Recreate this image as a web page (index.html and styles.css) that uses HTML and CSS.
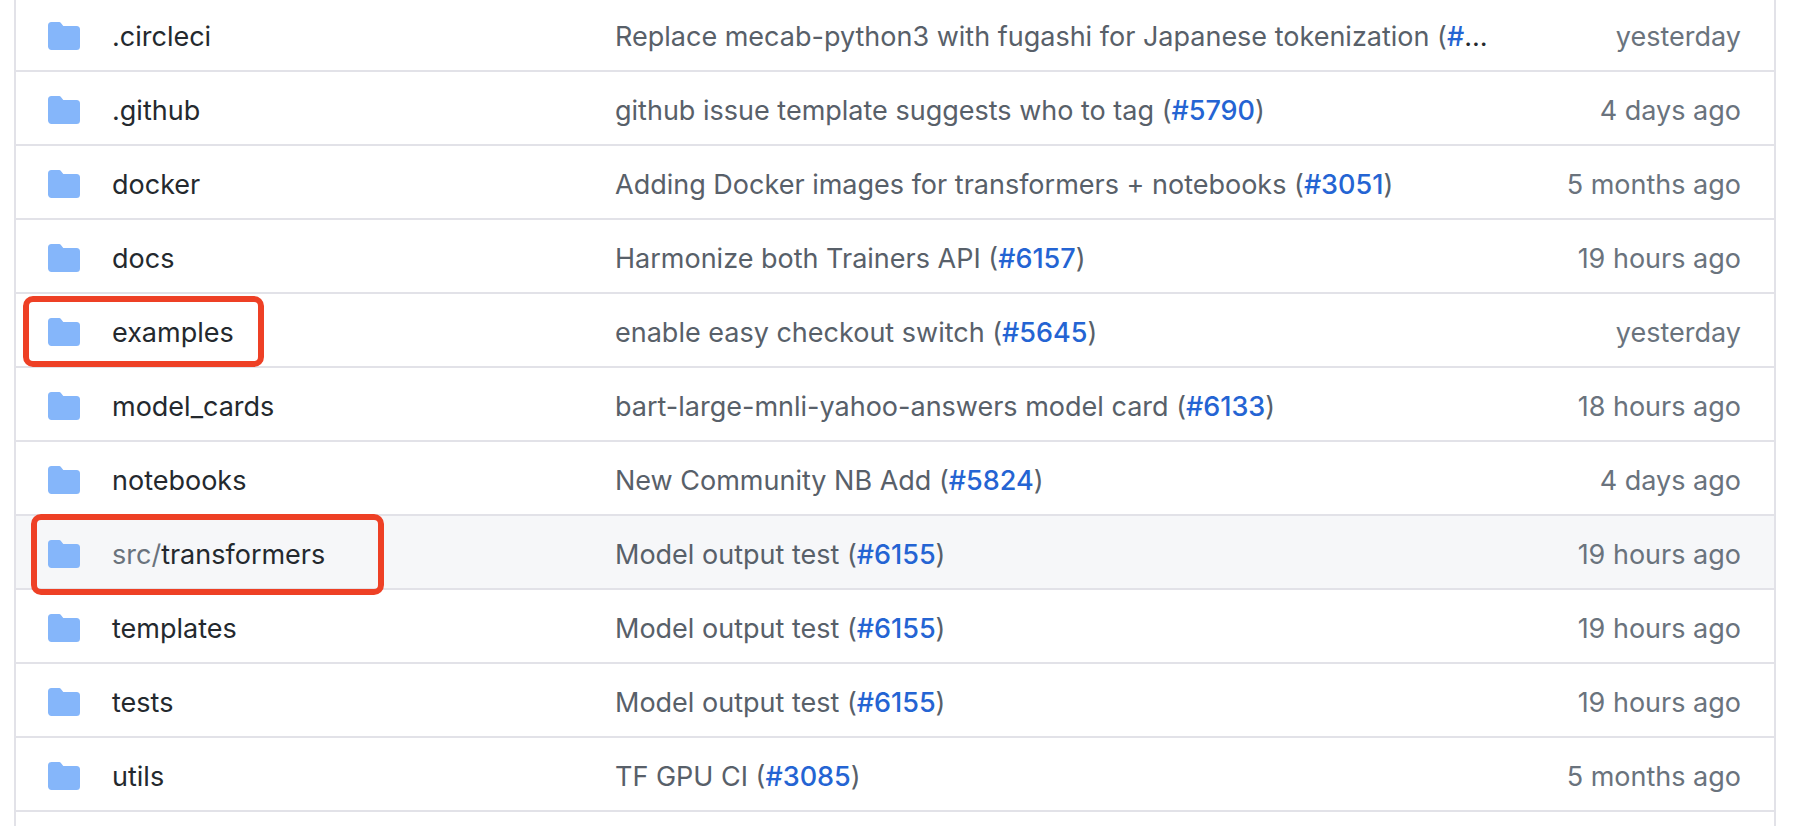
FILE: index.html
```
<!DOCTYPE html>
<html lang="en">
<head>
<meta charset="utf-8">
<title>Files</title>
<link rel="stylesheet" href="styles.css">
</head>
<body>
<svg class="sprite" aria-hidden="true">
  <symbol id="folder" viewBox="0 0 16 16"><path d="M1.75 1A1.75 1.75 0 000 2.75v10.5C0 14.216.784 15 1.75 15h12.5A1.75 1.75 0 0016 13.25v-8.5A1.75 1.75 0 0014.25 3h-6.5a.25.25 0 01-.2-.1l-.9-1.2c-.33-.44-.85-.7-1.4-.7h-3.5z"/></symbol>
</svg>
<main class="files">
<table class="file-table">
  <colgroup><col class="col-icon"><col class="col-name"><col class="col-message"><col class="col-age"></colgroup>
  <tbody>
    <tr><td class="icon"><svg class="folder"><use href="#folder"/></svg></td><td class="name"><a href="#">.circleci</a></td><td class="message"><span>Replace mecab-python3 with fugashi for Japanese tokenization (<a href="#">#</a></span>…</td><td class="age">yesterday</td></tr>
    <tr><td class="icon"><svg class="folder"><use href="#folder"/></svg></td><td class="name"><a href="#">.github</a></td><td class="message"><span>github issue template suggests who to tag (<a href="#">#5790</a>)</span></td><td class="age">4 days ago</td></tr>
    <tr><td class="icon"><svg class="folder"><use href="#folder"/></svg></td><td class="name"><a href="#">docker</a></td><td class="message"><span>Adding Docker images for transformers + notebooks (<a href="#">#3051</a>)</span></td><td class="age">5 months ago</td></tr>
    <tr><td class="icon"><svg class="folder"><use href="#folder"/></svg></td><td class="name"><a href="#">docs</a></td><td class="message"><span>Harmonize both Trainers API (<a href="#">#6157</a>)</span></td><td class="age">19 hours ago</td></tr>
    <tr><td class="icon"><svg class="folder"><use href="#folder"/></svg><span class="mark mark-examples"></span></td><td class="name"><a href="#">examples</a></td><td class="message"><span>enable easy checkout switch (<a href="#">#5645</a>)</span></td><td class="age">yesterday</td></tr>
    <tr><td class="icon"><svg class="folder"><use href="#folder"/></svg></td><td class="name"><a href="#">model_cards</a></td><td class="message"><span>bart-large-mnli-yahoo-answers model card (<a href="#">#6133</a>)</span></td><td class="age">18 hours ago</td></tr>
    <tr><td class="icon"><svg class="folder"><use href="#folder"/></svg></td><td class="name"><a href="#">notebooks</a></td><td class="message"><span>New Community NB Add (<a href="#">#5824</a>)</span></td><td class="age">4 days ago</td></tr>
    <tr class="active"><td class="icon"><svg class="folder"><use href="#folder"/></svg><span class="mark mark-transformers"></span></td><td class="name"><a href="#"><span class="parent">src/</span>transformers</a></td><td class="message"><span>Model output test (<a href="#">#6155</a>)</span></td><td class="age">19 hours ago</td></tr>
    <tr><td class="icon"><svg class="folder"><use href="#folder"/></svg></td><td class="name"><a href="#">templates</a></td><td class="message"><span>Model output test (<a href="#">#6155</a>)</span></td><td class="age">19 hours ago</td></tr>
    <tr><td class="icon"><svg class="folder"><use href="#folder"/></svg></td><td class="name"><a href="#">tests</a></td><td class="message"><span>Model output test (<a href="#">#6155</a>)</span></td><td class="age">19 hours ago</td></tr>
    <tr><td class="icon"><svg class="folder"><use href="#folder"/></svg></td><td class="name"><a href="#">utils</a></td><td class="message"><span>TF GPU CI (<a href="#">#3085</a>)</span></td><td class="age">5 months ago</td></tr>
  </tbody>
</table>
</main>
</body>
</html>
```
FILE: styles.css
```
* { box-sizing: border-box; }
body {
  margin: 0;
  background: #fff;
  color: #24292e;
  font: 27px/42px Inter, "Liberation Sans", sans-serif;
}
a { color: inherit; text-decoration: none; }
.sprite { display: none; }
.files {
  display: flow-root;
  min-height: 100vh;
  margin: 0 18px 0 14px;
  border: solid #e2e2e8;
  border-width: 0 2px;
  overflow: hidden;
}
.file-table {
  width: 100%;
  margin-top: -2px;
  table-layout: fixed;
  border-collapse: separate;
  border-spacing: 0;
}
.col-icon { width: 96px; }
.col-name { width: 503px; }
.col-age { width: 270px; }
td {
  height: 74px;
  padding: 6px 0 0;
  border-bottom: 2px solid #e2e2e8;
  white-space: nowrap;
  vertical-align: middle;
}
.icon { position: relative; padding: 4px 0 0 32px; }
.folder { display: block; width: 32px; height: 32px; fill: #85b6fa; }
.message { overflow: hidden; text-overflow: ellipsis; }
.message span { color: #586069; }
.message a { color: #2464d3; font-weight: 500; }
.age { padding-right: 33px; text-align: right; color: #6a737d; }
.parent { color: #6a737d; }
.active td { background: #f6f7f9; }
.mark {
  position: absolute;
  z-index: 1;
  border: 6px solid #ee4025;
  border-radius: 10px;
  pointer-events: none;
}
.mark-examples { left: 7px; top: 2px; width: 241px; height: 71px; }
.mark-transformers { left: 15px; top: -2px; width: 353px; height: 81px; }
```
